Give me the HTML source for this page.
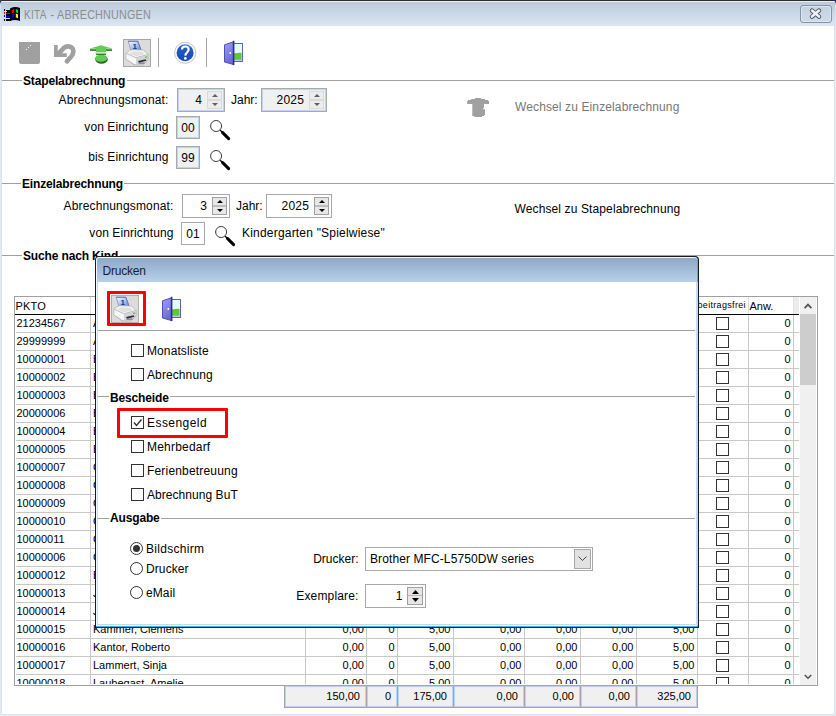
<!DOCTYPE html>
<html><head><meta charset="utf-8">
<style>
*{margin:0;padding:0;box-sizing:border-box}
html,body{width:836px;height:716px;overflow:hidden;background:#fff}
body{position:relative;font-family:"Liberation Sans",sans-serif;font-size:12px;color:#000}
.a{position:absolute}
.t{position:absolute;white-space:nowrap}
svg{position:absolute;overflow:visible}
</style></head><body>
<div class="a" style="left:0px;top:0px;width:5px;height:5px;background:#2a5da8"></div>
<div class="a" style="left:831px;top:0px;width:5px;height:5px;background:#2a5da8"></div>
<div class="a" style="left:0px;top:0px;width:836px;height:716px;background:#dae3ee;border-radius:5px 5px 0 0"></div>
<div class="a" style="left:0px;top:0px;width:836px;height:2px;background:#2e2e2e;border-radius:5px 5px 0 0"></div>
<div class="a" style="left:1px;top:1px;width:834px;height:1px;background:#e9eff6;border-radius:4px 4px 0 0"></div>
<div class="a" style="left:1px;top:2px;width:834px;height:24px;background:linear-gradient(#bccada,#dbe6f2);border-radius:0"></div>
<div class="a" style="left:0px;top:26px;width:836px;height:690px;background:#e7eaef"></div>
<div class="a" style="left:1px;top:26px;width:834px;height:689px;background:#d6e2f0"></div>
<div class="a" style="left:2px;top:26px;width:832px;height:688px;background:#fff"></div>
<svg style="left:0;top:0" width="30" height="30" viewBox="0 0 30 30" shape-rendering="crispEdges">
<rect x="4" y="9" width="1" height="2" fill="#000"/><rect x="4" y="12" width="1" height="2" fill="#f00"/><rect x="4" y="15" width="1" height="2" fill="#00f"/><rect x="4" y="19" width="1" height="2" fill="#000"/>
<rect x="6" y="10" width="5" height="1" fill="#000"/><rect x="7" y="11" width="4" height="1" fill="#000"/>
<rect x="6" y="12" width="5" height="3" fill="#000"/><rect x="6" y="13" width="5" height="1" fill="#f00"/>
<rect x="6" y="15" width="5" height="3" fill="#000"/><rect x="6" y="16" width="5" height="1" fill="#00f"/>
<rect x="6" y="19" width="5" height="2" fill="#000"/>
</svg>
<svg style="left:0;top:0" width="30" height="30" viewBox="0 0 30 30">
<path d="M10 8.5 Q15 6 20 8 V21 Q15 19 10 21 Z" fill="#000"/>
<path d="M12 10 L14.3 9 V12.3 L12 13.3Z" fill="#f00"/><path d="M15.8 9 L18 10 V13 L15.8 12.3Z" fill="#0e0"/>
<path d="M12 14.5 L14.3 13.6 V17 L12 18Z" fill="#00f"/><path d="M15.8 13.6 L18 14.5 V18.2 L15.8 17.2Z" fill="#ff0"/>
</svg>
<div class="t" style="top:7.84px;font-size:12px;line-height:14px;color:#8c8c8c;letter-spacing:0.3px;left:24.2px;transform:scaleX(0.84);transform-origin:0 0;">KITA</div>
<div class="t" style="top:7.84px;font-size:12px;line-height:14px;color:#8c8c8c;left:50.2px;">-</div>
<div class="t" style="top:7.84px;font-size:12px;line-height:14px;color:#8c8c8c;letter-spacing:0.2px;left:57.3px;transform:scaleX(0.9);transform-origin:0 0;">ABRECHNUNGEN</div>
<div class="a" style="left:800px;top:5px;width:32px;height:18px;border:1px solid #8593aa;border-radius:3px;background:linear-gradient(#c4d1df,#d0dbe8);box-shadow:inset 0 0 0 1px #dde6f0"></div>
<svg style="left:808px;top:7px" width="15" height="13" viewBox="0 0 15 13">
<path d="M4 3.6 L11 9.6 M11 3.6 L4 9.6" stroke="#454f60" stroke-width="4.4" stroke-linecap="round"/>
<path d="M4 3.6 L11 9.6 M11 3.6 L4 9.6" stroke="#f2f2f2" stroke-width="2.6" stroke-linecap="round"/>
</svg>
<div class="a" style="left:19px;top:42px;width:21px;height:22px;background:#a0a0a0;border-radius:0 0 2px 2px"></div>
<svg style="left:0;top:0" width="60" height="60" shape-rendering="crispEdges"><rect x="30" y="45" width="1" height="1" fill="#fff"/><rect x="28" y="47" width="1" height="1" fill="#fff"/><rect x="26" y="49" width="1" height="1" fill="#fff"/></svg>
<svg style="left:0;top:0" width="90" height="70" viewBox="0 0 90 70">
<path d="M54 45 H57.7 V53.3 H66.8 V56.9 H54 Z" fill="#a0a0a0"/>
<path d="M58.5 53.5 L64 47.8 Q65.5 46.3 68 46.3 A5.4 4.8 0 0 1 73.4 51.2 Q73.4 54 71 56.8 L66.9 61.3" fill="none" stroke="#a0a0a0" stroke-width="4.7" stroke-linecap="round"/>
</svg>
<svg style="left:84px;top:40px" width="30" height="30" viewBox="84 40 30 30"><path d="M90 50.7 V48.8 Q92 47.6 96 46.8 L99.5 45.8 Q101 44.9 102.5 45.8 L106 46.8 Q110 47.6 112 48.8 V50.7 Z" fill="#62cc55"/>
<rect x="90" y="49.6" width="6" height="1.1" fill="#2b6a26"/><rect x="106" y="49.6" width="6" height="1.1" fill="#2b6a26"/>
<rect x="90.5" y="48.2" width="5.5" height="0.8" fill="#9be290"/><rect x="106" y="48.2" width="5.5" height="0.8" fill="#9be290"/>
<rect x="96" y="50" width="10" height="2.5" fill="#62cc55"/>
<rect x="95.3" y="52.3" width="11.4" height="1.3" fill="#d0f0c8"/>
<rect x="96" y="53.6" width="10" height="1.6" fill="#3c7a34"/>
<ellipse cx="101.5" cy="59.5" rx="6.3" ry="4.2" fill="#2b6a26"/>
<ellipse cx="101" cy="58.4" rx="6.1" ry="3.4" fill="#62cc55"/></svg>
<div class="a" style="left:123px;top:39px;width:28px;height:28px;border:1px solid #a6a6a6;background:#dcdcdc"></div>
<svg style="left:123px;top:39px" width="30" height="30" viewBox="123 39 30 30">
<defs><linearGradient id="pp0" x1="0" y1="0" x2="1" y2="1"><stop offset="0" stop-color="#ffffff"/><stop offset="0.6" stop-color="#9cc0f0"/><stop offset="1" stop-color="#5b8fe0"/></linearGradient></defs>
<path d="M128.3 41.2 L137.8 41.2 L141 50.2 L130.8 50.2 Z" fill="url(#pp0)" stroke="#8a8ed0" stroke-width="0.8"/>
<path d="M128 41.3 H137.8 L141 50" fill="none" stroke="#6a6ab8" stroke-width="0.9"/>
<text x="132.4" y="49" font-size="8" font-weight="bold" fill="#26367a" font-family="Liberation Sans">1</text>
<path d="M126 53 L131 49.8 L143.5 50 L148 54.5 L148 60 L143 64.8 L134 64.8 L126 59 Z" fill="#e6e6e6" stroke="#a8a8a8" stroke-width="0.8"/>
<path d="M126.4 53 L131 50.2 L143.3 50.4 L147.6 54.5 L136 57.6 Z" fill="#f2f2f2"/>
<path d="M129.5 53.5 L133 51.6 L142 51.8 L144.5 54.2 L136 56.2 Z" fill="#e0e0e0"/>
<path d="M126.4 53.4 L136 57.8 L136 64.4 L126.4 58.8 Z" fill="#f7f7f7"/>
<path d="M126.4 53.4 L136 57.8 L147.6 54.6" fill="none" stroke="#b0b0b0" stroke-width="0.8"/>
<path d="M136 58 L147.6 55 V60 L143 64.4 H136 Z" fill="#d4d4d4"/>
<path d="M138 61 L145.5 59.2 L146.5 60.8 L139 62.8 Z" fill="#303030"/>
<rect x="138.5" y="62.6" width="6" height="1" fill="#5a5ab0"/>
<rect x="145" y="56.6" width="2.2" height="1.2" fill="#48c040"/>
</svg>
<div class="a" style="left:158px;top:38px;width:1px;height:29px;background:#a5a5a5"></div>
<svg style="left:0;top:0" width="250" height="70" viewBox="0 0 250 70">
<defs><linearGradient id="hg" x1="0" y1="0" x2="0" y2="1"><stop offset="0" stop-color="#3d7ee0"/><stop offset="0.25" stop-color="#2458c8"/><stop offset="1" stop-color="#1a46b8"/></linearGradient></defs>
<circle cx="185.2" cy="52.8" r="10.6" fill="#f7f8fb" stroke="#b9c0cc" stroke-width="0.9"/>
<circle cx="185.1" cy="52.8" r="8.5" fill="url(#hg)"/>
<path d="M182 49.6 C182 45.6 188.6 45.4 188.6 49.4 C188.6 52.2 185.4 52.6 185.3 55.6" fill="none" stroke="#fff" stroke-width="2.2"/>
<circle cx="185.3" cy="58.4" r="1.4" fill="#fff"/>
</svg>
<div class="a" style="left:206px;top:38px;width:1px;height:29px;background:#a5a5a5"></div>
<svg style="left:220px;top:38px" width="30" height="30" viewBox="220 38 30 30">
<defs><linearGradient id="dg0" x1="0" y1="0" x2="0.4" y2="1"><stop offset="0" stop-color="#a0a0fa"/><stop offset="1" stop-color="#6a6ad4"/></linearGradient></defs>
<rect x="233.5" y="43.5" width="9" height="18" fill="#c8c8f6" stroke="#6060b4" stroke-width="1"/>
<rect x="234" y="44" width="8" height="9.5" fill="#e4fcff"/>
<path d="M234 53.5 Q238 52.6 241.3 52.8 V59.8 H234Z" fill="#5cc83a"/>
<path d="M224.5 44.8 L233.5 41.8 V64.5 L224.5 62 Z" fill="url(#dg0)" stroke="#5050b0" stroke-width="1"/>
<rect x="232.8" y="40.8" width="1.6" height="24.3" fill="#2e2e80"/>
<ellipse cx="230.3" cy="53" rx="0.9" ry="1.1" fill="#fff"/>
</svg>
<div class="a" style="left:2px;top:80px;width:832px;height:1px;background:#a0a0a0"></div>
<div class="t" style="left:21.5px;top:73.84px;font-size:12px;line-height:14px;font-weight:bold;background:#fff;padding:0 1.5px;letter-spacing:-0.15px">Stapelabrechnung</div>
<div class="t" style="top:92.84px;font-size:12px;line-height:14px;color:#000;letter-spacing:0.15px;right:667.5px;text-align:right;">Abrechnungsmonat:</div>
<div class="a" style="left:177px;top:88px;width:48px;height:24px;border:1px solid #a9a9a9;background:#f0f0f0;box-shadow:inset 0 0 0 1px #bdd7f3"></div>
<div class="a" style="left:207px;top:91px;width:15px;height:9px;background:#ececec;border:1px solid #dadada"></div>
<div class="a" style="left:207px;top:100px;width:15px;height:9px;background:#ececec;border:1px solid #dadada"></div>
<svg style="left:211.5px;top:94px" width="6" height="3"><path d="M0 3 L3 0 L6 3Z" fill="#606060"/></svg>
<svg style="left:211.5px;top:103px" width="6" height="3"><path d="M0 0 L3 3 L6 0Z" fill="#606060"/></svg>
<div class="t" style="top:92.84px;font-size:12px;line-height:14px;color:#000;letter-spacing:0.3px;right:633.7px;text-align:right;">4</div>
<div class="t" style="top:92.84px;font-size:12px;line-height:14px;color:#000;left:231px;">Jahr:</div>
<div class="a" style="left:261px;top:88px;width:66px;height:24px;border:1px solid #a9a9a9;background:#f0f0f0;box-shadow:inset 0 0 0 1px #bdd7f3"></div>
<div class="a" style="left:309px;top:91px;width:15px;height:9px;background:#ececec;border:1px solid #dadada"></div>
<div class="a" style="left:309px;top:100px;width:15px;height:9px;background:#ececec;border:1px solid #dadada"></div>
<svg style="left:313.5px;top:94px" width="6" height="3"><path d="M0 3 L3 0 L6 3Z" fill="#606060"/></svg>
<svg style="left:313.5px;top:103px" width="6" height="3"><path d="M0 0 L3 3 L6 0Z" fill="#606060"/></svg>
<div class="t" style="top:92.84px;font-size:12px;line-height:14px;color:#000;letter-spacing:0.3px;right:531.7px;text-align:right;">2025</div>
<div class="t" style="top:120.04px;font-size:12px;line-height:14px;color:#000;letter-spacing:0.1px;right:667.5px;text-align:right;">von Einrichtung</div>
<div class="a" style="left:176px;top:116px;width:24px;height:23px;border:1px solid #a9a9a9;background:#f0f0f0;box-shadow:inset 0 0 0 1px #bdd7f3"></div>
<div class="t" style="top:120.84px;font-size:12px;line-height:14px;color:#000;left:88px;width:200px;text-align:center;">00</div>
<svg style="left:210px;top:120px" width="21" height="21" viewBox="0 0 21 21">
<circle cx="6.1" cy="6" r="5.5" fill="#fff" stroke="#3c3c3c" stroke-width="1"/>
<path d="M10.2 10.2 L12.5 12.5" stroke="#000" stroke-width="1.4"/>
<path d="M12.6 12.6 L18.6 18.6" stroke="#000" stroke-width="3" stroke-linecap="round"/>
</svg>
<div class="t" style="top:150.04px;font-size:12px;line-height:14px;color:#000;letter-spacing:0.1px;right:667.5px;text-align:right;">bis Einrichtung</div>
<div class="a" style="left:176px;top:146px;width:24px;height:23px;border:1px solid #a9a9a9;background:#f0f0f0;box-shadow:inset 0 0 0 1px #bdd7f3"></div>
<div class="t" style="top:150.84px;font-size:12px;line-height:14px;color:#000;left:88px;width:200px;text-align:center;">99</div>
<svg style="left:210px;top:150px" width="21" height="21" viewBox="0 0 21 21">
<circle cx="6.1" cy="6" r="5.5" fill="#fff" stroke="#3c3c3c" stroke-width="1"/>
<path d="M10.2 10.2 L12.5 12.5" stroke="#000" stroke-width="1.4"/>
<path d="M12.6 12.6 L18.6 18.6" stroke="#000" stroke-width="3" stroke-linecap="round"/>
</svg>
<svg style="left:460px;top:94px" width="32" height="26" viewBox="460 94 32 26"><path d="M475 98 H481 V99 H485 V100 H488 V101 H489 V104 H484 V108.3 H483 V109.3 H485 V115 H484 V116 H482 V117 H474.3 V116 H472.3 V104 H467.2 V101 H468 V100 H471.2 V99 H475 Z" fill="#a0a0a0"/></svg>
<div class="t" style="top:100.34px;font-size:12px;line-height:14px;color:#777;letter-spacing:0.12px;left:515px;">Wechsel zu Einzelabrechnung</div>
<div class="a" style="left:2px;top:183px;width:832px;height:1px;background:#a0a0a0"></div>
<div class="t" style="left:20.5px;top:176.84px;font-size:12px;line-height:14px;font-weight:bold;background:#fff;padding:0 1.5px;letter-spacing:-0.15px">Einzelabrechnung</div>
<div class="t" style="top:198.84px;font-size:12px;line-height:14px;color:#000;letter-spacing:0.15px;right:662.5px;text-align:right;">Abrechnungsmonat:</div>
<div class="a" style="left:182px;top:194px;width:48px;height:24px;border:1px solid #a6a6ac;background:#fff"></div>
<div class="a" style="left:212px;top:197px;width:15px;height:18px;background:#e8e8e8;border:1px solid #a0a0a0"></div>
<div class="a" style="left:213px;top:205px;width:13px;height:1.5px;background:#bdbdbd"></div>
<svg style="left:216.5px;top:200px" width="6" height="3"><path d="M0 3 L3 0 L6 3Z" fill="#000"/></svg>
<svg style="left:216.5px;top:208.5px" width="6" height="3"><path d="M0 0 L3 3 L6 0Z" fill="#000"/></svg>
<div class="t" style="top:198.84px;font-size:12px;line-height:14px;color:#000;letter-spacing:0.3px;right:628.7px;text-align:right;">3</div>
<div class="t" style="top:198.84px;font-size:12px;line-height:14px;color:#000;left:236px;">Jahr:</div>
<div class="a" style="left:266px;top:194px;width:66px;height:24px;border:1px solid #a6a6ac;background:#fff"></div>
<div class="a" style="left:314px;top:197px;width:15px;height:18px;background:#e8e8e8;border:1px solid #a0a0a0"></div>
<div class="a" style="left:315px;top:205px;width:13px;height:1.5px;background:#bdbdbd"></div>
<svg style="left:318.5px;top:200px" width="6" height="3"><path d="M0 3 L3 0 L6 3Z" fill="#000"/></svg>
<svg style="left:318.5px;top:208.5px" width="6" height="3"><path d="M0 0 L3 3 L6 0Z" fill="#000"/></svg>
<div class="t" style="top:198.84px;font-size:12px;line-height:14px;color:#000;letter-spacing:0.3px;right:526.7px;text-align:right;">2025</div>
<div class="t" style="top:225.84px;font-size:12px;line-height:14px;color:#000;letter-spacing:0.1px;right:662.5px;text-align:right;">von Einrichtung</div>
<div class="a" style="left:181px;top:222px;width:24px;height:23px;border:1px solid #a8a8ac;background:#fff"></div>
<div class="t" style="top:226.84px;font-size:12px;line-height:14px;color:#000;left:93px;width:200px;text-align:center;">01</div>
<svg style="left:215px;top:226px" width="21" height="21" viewBox="0 0 21 21">
<circle cx="6.1" cy="6" r="5.5" fill="#fff" stroke="#3c3c3c" stroke-width="1"/>
<path d="M10.2 10.2 L12.5 12.5" stroke="#000" stroke-width="1.4"/>
<path d="M12.6 12.6 L18.6 18.6" stroke="#000" stroke-width="3" stroke-linecap="round"/>
</svg>
<div class="t" style="top:225.84px;font-size:12px;line-height:14px;color:#000;letter-spacing:0.2px;left:242px;">Kindergarten "Spielwiese"</div>
<div class="t" style="top:201.84px;font-size:12px;line-height:14px;color:#000;letter-spacing:0.12px;left:514.5px;">Wechsel zu Stapelabrechnung</div>
<div class="a" style="left:2px;top:255px;width:832px;height:1px;background:#a0a0a0"></div>
<div class="t" style="left:21.5px;top:248.84px;font-size:12px;line-height:14px;font-weight:bold;background:#fff;padding:0 1.5px;letter-spacing:-0.15px">Suche nach Kind</div>
<div class="a" style="left:14px;top:296px;width:804px;height:390px;border:1px solid #a0a0a0;background:#fff"></div>
<div class="a" style="left:15px;top:297px;width:783px;height:17px;background:#fff"></div>
<div class="a" style="left:793px;top:297px;width:6px;height:17px;background:#ececec"></div>
<div class="a" style="left:90px;top:297px;width:1px;height:17px;background:#e0e0e0"></div>
<div class="a" style="left:305px;top:297px;width:1px;height:17px;background:#e0e0e0"></div>
<div class="a" style="left:366px;top:297px;width:1px;height:17px;background:#e0e0e0"></div>
<div class="a" style="left:397px;top:297px;width:1px;height:17px;background:#e0e0e0"></div>
<div class="a" style="left:453px;top:297px;width:1px;height:17px;background:#e0e0e0"></div>
<div class="a" style="left:524px;top:297px;width:1px;height:17px;background:#e0e0e0"></div>
<div class="a" style="left:580px;top:297px;width:1px;height:17px;background:#e0e0e0"></div>
<div class="a" style="left:636px;top:297px;width:1px;height:17px;background:#e0e0e0"></div>
<div class="a" style="left:697px;top:297px;width:1px;height:17px;background:#e0e0e0"></div>
<div class="a" style="left:748px;top:297px;width:1px;height:17px;background:#e0e0e0"></div>
<div class="a" style="left:793px;top:297px;width:1px;height:17px;background:#e0e0e0"></div>
<div class="a" style="left:15px;top:314px;width:784px;height:1px;background:#000"></div>
<div class="t" style="top:299.69px;font-size:11px;line-height:13px;color:#000;letter-spacing:0.15px;left:15.5px;">PKTO</div>
<div class="t" style="top:299.69px;font-size:11px;line-height:13px;color:#000;left:749.5px;">Anw.</div>
<div class="t" style="top:300.38px;font-size:9px;line-height:11px;color:#000;letter-spacing:0.32px;left:697.5px;">beitragsfrei</div>
<div class="a" style="left:15px;top:315px;width:784px;height:369px;overflow:hidden">
<div class="a" style="left:-15px;top:-315px;width:836px;height:716px">
<div class="a" style="left:90px;top:315px;width:1px;height:370px;background:#c8c8c8"></div>
<div class="a" style="left:305px;top:315px;width:1px;height:370px;background:#c8c8c8"></div>
<div class="a" style="left:366px;top:315px;width:1px;height:370px;background:#c8c8c8"></div>
<div class="a" style="left:397px;top:315px;width:1px;height:370px;background:#c8c8c8"></div>
<div class="a" style="left:453px;top:315px;width:1px;height:370px;background:#c8c8c8"></div>
<div class="a" style="left:524px;top:315px;width:1px;height:370px;background:#c8c8c8"></div>
<div class="a" style="left:580px;top:315px;width:1px;height:370px;background:#c8c8c8"></div>
<div class="a" style="left:636px;top:315px;width:1px;height:370px;background:#c8c8c8"></div>
<div class="a" style="left:697px;top:315px;width:1px;height:370px;background:#c8c8c8"></div>
<div class="a" style="left:748px;top:315px;width:1px;height:370px;background:#c8c8c8"></div>
<div class="a" style="left:793px;top:315px;width:1px;height:370px;background:#c8c8c8"></div>
<div class="t" style="left:16.5px;top:316.69px;font-size:11px;line-height:13px">21234567</div>
<div class="t" style="left:93px;top:316.69px;font-size:11px;line-height:13px">Albrecht, Anna</div>
<div class="t" style="right:472px;top:316.69px;font-size:11px;line-height:13px;text-align:right">0,00</div>
<div class="t" style="right:441.5px;top:316.69px;font-size:11px;line-height:13px;text-align:right">0</div>
<div class="t" style="right:385.5px;top:316.69px;font-size:11px;line-height:13px;text-align:right">5,00</div>
<div class="t" style="right:314.5px;top:316.69px;font-size:11px;line-height:13px;text-align:right">0,00</div>
<div class="t" style="right:258.5px;top:316.69px;font-size:11px;line-height:13px;text-align:right">0,00</div>
<div class="t" style="right:202.5px;top:316.69px;font-size:11px;line-height:13px;text-align:right">0,00</div>
<div class="t" style="right:141.5px;top:316.69px;font-size:11px;line-height:13px;text-align:right">5,00</div>
<div class="t" style="right:45.5px;top:316.69px;font-size:11px;line-height:13px;text-align:right">0</div>
<div class="a" style="left:716px;top:317px;width:13px;height:13px;border:1px solid #333"></div>
<div class="a" style="left:16px;top:332px;width:783px;height:1px;background:#c8c8c8"></div>
<div class="t" style="left:16.5px;top:334.69px;font-size:11px;line-height:13px">29999999</div>
<div class="t" style="left:93px;top:334.69px;font-size:11px;line-height:13px">Anders, Paul</div>
<div class="t" style="right:472px;top:334.69px;font-size:11px;line-height:13px;text-align:right">0,00</div>
<div class="t" style="right:441.5px;top:334.69px;font-size:11px;line-height:13px;text-align:right">0</div>
<div class="t" style="right:385.5px;top:334.69px;font-size:11px;line-height:13px;text-align:right">5,00</div>
<div class="t" style="right:314.5px;top:334.69px;font-size:11px;line-height:13px;text-align:right">0,00</div>
<div class="t" style="right:258.5px;top:334.69px;font-size:11px;line-height:13px;text-align:right">0,00</div>
<div class="t" style="right:202.5px;top:334.69px;font-size:11px;line-height:13px;text-align:right">0,00</div>
<div class="t" style="right:141.5px;top:334.69px;font-size:11px;line-height:13px;text-align:right">5,00</div>
<div class="t" style="right:45.5px;top:334.69px;font-size:11px;line-height:13px;text-align:right">0</div>
<div class="a" style="left:716px;top:335px;width:13px;height:13px;border:1px solid #333"></div>
<div class="a" style="left:16px;top:350px;width:783px;height:1px;background:#c8c8c8"></div>
<div class="t" style="left:16.5px;top:352.69px;font-size:11px;line-height:13px">10000001</div>
<div class="t" style="left:93px;top:352.69px;font-size:11px;line-height:13px">Bauer, Lena</div>
<div class="t" style="right:472px;top:352.69px;font-size:11px;line-height:13px;text-align:right">0,00</div>
<div class="t" style="right:441.5px;top:352.69px;font-size:11px;line-height:13px;text-align:right">0</div>
<div class="t" style="right:385.5px;top:352.69px;font-size:11px;line-height:13px;text-align:right">5,00</div>
<div class="t" style="right:314.5px;top:352.69px;font-size:11px;line-height:13px;text-align:right">0,00</div>
<div class="t" style="right:258.5px;top:352.69px;font-size:11px;line-height:13px;text-align:right">0,00</div>
<div class="t" style="right:202.5px;top:352.69px;font-size:11px;line-height:13px;text-align:right">0,00</div>
<div class="t" style="right:141.5px;top:352.69px;font-size:11px;line-height:13px;text-align:right">5,00</div>
<div class="t" style="right:45.5px;top:352.69px;font-size:11px;line-height:13px;text-align:right">0</div>
<div class="a" style="left:716px;top:353px;width:13px;height:13px;border:1px solid #333"></div>
<div class="a" style="left:16px;top:368px;width:783px;height:1px;background:#c8c8c8"></div>
<div class="t" style="left:16.5px;top:370.69px;font-size:11px;line-height:13px">10000002</div>
<div class="t" style="left:93px;top:370.69px;font-size:11px;line-height:13px">Becker, Jonas</div>
<div class="t" style="right:472px;top:370.69px;font-size:11px;line-height:13px;text-align:right">0,00</div>
<div class="t" style="right:441.5px;top:370.69px;font-size:11px;line-height:13px;text-align:right">0</div>
<div class="t" style="right:385.5px;top:370.69px;font-size:11px;line-height:13px;text-align:right">5,00</div>
<div class="t" style="right:314.5px;top:370.69px;font-size:11px;line-height:13px;text-align:right">0,00</div>
<div class="t" style="right:258.5px;top:370.69px;font-size:11px;line-height:13px;text-align:right">0,00</div>
<div class="t" style="right:202.5px;top:370.69px;font-size:11px;line-height:13px;text-align:right">0,00</div>
<div class="t" style="right:141.5px;top:370.69px;font-size:11px;line-height:13px;text-align:right">5,00</div>
<div class="t" style="right:45.5px;top:370.69px;font-size:11px;line-height:13px;text-align:right">0</div>
<div class="a" style="left:716px;top:371px;width:13px;height:13px;border:1px solid #333"></div>
<div class="a" style="left:16px;top:386px;width:783px;height:1px;background:#c8c8c8"></div>
<div class="t" style="left:16.5px;top:388.69px;font-size:11px;line-height:13px">10000003</div>
<div class="t" style="left:93px;top:388.69px;font-size:11px;line-height:13px">Berger, Mia</div>
<div class="t" style="right:472px;top:388.69px;font-size:11px;line-height:13px;text-align:right">0,00</div>
<div class="t" style="right:441.5px;top:388.69px;font-size:11px;line-height:13px;text-align:right">0</div>
<div class="t" style="right:385.5px;top:388.69px;font-size:11px;line-height:13px;text-align:right">5,00</div>
<div class="t" style="right:314.5px;top:388.69px;font-size:11px;line-height:13px;text-align:right">0,00</div>
<div class="t" style="right:258.5px;top:388.69px;font-size:11px;line-height:13px;text-align:right">0,00</div>
<div class="t" style="right:202.5px;top:388.69px;font-size:11px;line-height:13px;text-align:right">0,00</div>
<div class="t" style="right:141.5px;top:388.69px;font-size:11px;line-height:13px;text-align:right">5,00</div>
<div class="t" style="right:45.5px;top:388.69px;font-size:11px;line-height:13px;text-align:right">0</div>
<div class="a" style="left:716px;top:389px;width:13px;height:13px;border:1px solid #333"></div>
<div class="a" style="left:16px;top:404px;width:783px;height:1px;background:#c8c8c8"></div>
<div class="t" style="left:16.5px;top:406.69px;font-size:11px;line-height:13px">20000006</div>
<div class="t" style="left:93px;top:406.69px;font-size:11px;line-height:13px">Braun, Felix</div>
<div class="t" style="right:472px;top:406.69px;font-size:11px;line-height:13px;text-align:right">0,00</div>
<div class="t" style="right:441.5px;top:406.69px;font-size:11px;line-height:13px;text-align:right">0</div>
<div class="t" style="right:385.5px;top:406.69px;font-size:11px;line-height:13px;text-align:right">5,00</div>
<div class="t" style="right:314.5px;top:406.69px;font-size:11px;line-height:13px;text-align:right">0,00</div>
<div class="t" style="right:258.5px;top:406.69px;font-size:11px;line-height:13px;text-align:right">0,00</div>
<div class="t" style="right:202.5px;top:406.69px;font-size:11px;line-height:13px;text-align:right">0,00</div>
<div class="t" style="right:141.5px;top:406.69px;font-size:11px;line-height:13px;text-align:right">5,00</div>
<div class="t" style="right:45.5px;top:406.69px;font-size:11px;line-height:13px;text-align:right">0</div>
<div class="a" style="left:716px;top:407px;width:13px;height:13px;border:1px solid #333"></div>
<div class="a" style="left:16px;top:422px;width:783px;height:1px;background:#c8c8c8"></div>
<div class="t" style="left:16.5px;top:424.69px;font-size:11px;line-height:13px">10000004</div>
<div class="t" style="left:93px;top:424.69px;font-size:11px;line-height:13px">Brandt, Emma</div>
<div class="t" style="right:472px;top:424.69px;font-size:11px;line-height:13px;text-align:right">0,00</div>
<div class="t" style="right:441.5px;top:424.69px;font-size:11px;line-height:13px;text-align:right">0</div>
<div class="t" style="right:385.5px;top:424.69px;font-size:11px;line-height:13px;text-align:right">5,00</div>
<div class="t" style="right:314.5px;top:424.69px;font-size:11px;line-height:13px;text-align:right">0,00</div>
<div class="t" style="right:258.5px;top:424.69px;font-size:11px;line-height:13px;text-align:right">0,00</div>
<div class="t" style="right:202.5px;top:424.69px;font-size:11px;line-height:13px;text-align:right">0,00</div>
<div class="t" style="right:141.5px;top:424.69px;font-size:11px;line-height:13px;text-align:right">5,00</div>
<div class="t" style="right:45.5px;top:424.69px;font-size:11px;line-height:13px;text-align:right">0</div>
<div class="a" style="left:716px;top:425px;width:13px;height:13px;border:1px solid #333"></div>
<div class="a" style="left:16px;top:440px;width:783px;height:1px;background:#c8c8c8"></div>
<div class="t" style="left:16.5px;top:442.69px;font-size:11px;line-height:13px">10000005</div>
<div class="t" style="left:93px;top:442.69px;font-size:11px;line-height:13px">Busch, Leon</div>
<div class="t" style="right:472px;top:442.69px;font-size:11px;line-height:13px;text-align:right">0,00</div>
<div class="t" style="right:441.5px;top:442.69px;font-size:11px;line-height:13px;text-align:right">0</div>
<div class="t" style="right:385.5px;top:442.69px;font-size:11px;line-height:13px;text-align:right">5,00</div>
<div class="t" style="right:314.5px;top:442.69px;font-size:11px;line-height:13px;text-align:right">0,00</div>
<div class="t" style="right:258.5px;top:442.69px;font-size:11px;line-height:13px;text-align:right">0,00</div>
<div class="t" style="right:202.5px;top:442.69px;font-size:11px;line-height:13px;text-align:right">0,00</div>
<div class="t" style="right:141.5px;top:442.69px;font-size:11px;line-height:13px;text-align:right">5,00</div>
<div class="t" style="right:45.5px;top:442.69px;font-size:11px;line-height:13px;text-align:right">0</div>
<div class="a" style="left:716px;top:443px;width:13px;height:13px;border:1px solid #333"></div>
<div class="a" style="left:16px;top:458px;width:783px;height:1px;background:#c8c8c8"></div>
<div class="t" style="left:16.5px;top:460.69px;font-size:11px;line-height:13px">10000007</div>
<div class="t" style="left:93px;top:460.69px;font-size:11px;line-height:13px">Gerber, Lina</div>
<div class="t" style="right:472px;top:460.69px;font-size:11px;line-height:13px;text-align:right">0,00</div>
<div class="t" style="right:441.5px;top:460.69px;font-size:11px;line-height:13px;text-align:right">0</div>
<div class="t" style="right:385.5px;top:460.69px;font-size:11px;line-height:13px;text-align:right">5,00</div>
<div class="t" style="right:314.5px;top:460.69px;font-size:11px;line-height:13px;text-align:right">0,00</div>
<div class="t" style="right:258.5px;top:460.69px;font-size:11px;line-height:13px;text-align:right">0,00</div>
<div class="t" style="right:202.5px;top:460.69px;font-size:11px;line-height:13px;text-align:right">0,00</div>
<div class="t" style="right:141.5px;top:460.69px;font-size:11px;line-height:13px;text-align:right">5,00</div>
<div class="t" style="right:45.5px;top:460.69px;font-size:11px;line-height:13px;text-align:right">0</div>
<div class="a" style="left:716px;top:461px;width:13px;height:13px;border:1px solid #333"></div>
<div class="a" style="left:16px;top:476px;width:783px;height:1px;background:#c8c8c8"></div>
<div class="t" style="left:16.5px;top:478.69px;font-size:11px;line-height:13px">10000008</div>
<div class="t" style="left:93px;top:478.69px;font-size:11px;line-height:13px">Graf, Tim</div>
<div class="t" style="right:472px;top:478.69px;font-size:11px;line-height:13px;text-align:right">0,00</div>
<div class="t" style="right:441.5px;top:478.69px;font-size:11px;line-height:13px;text-align:right">0</div>
<div class="t" style="right:385.5px;top:478.69px;font-size:11px;line-height:13px;text-align:right">5,00</div>
<div class="t" style="right:314.5px;top:478.69px;font-size:11px;line-height:13px;text-align:right">0,00</div>
<div class="t" style="right:258.5px;top:478.69px;font-size:11px;line-height:13px;text-align:right">0,00</div>
<div class="t" style="right:202.5px;top:478.69px;font-size:11px;line-height:13px;text-align:right">0,00</div>
<div class="t" style="right:141.5px;top:478.69px;font-size:11px;line-height:13px;text-align:right">5,00</div>
<div class="t" style="right:45.5px;top:478.69px;font-size:11px;line-height:13px;text-align:right">0</div>
<div class="a" style="left:716px;top:479px;width:13px;height:13px;border:1px solid #333"></div>
<div class="a" style="left:16px;top:494px;width:783px;height:1px;background:#c8c8c8"></div>
<div class="t" style="left:16.5px;top:496.69px;font-size:11px;line-height:13px">10000009</div>
<div class="t" style="left:93px;top:496.69px;font-size:11px;line-height:13px">Gross, Noah</div>
<div class="t" style="right:472px;top:496.69px;font-size:11px;line-height:13px;text-align:right">0,00</div>
<div class="t" style="right:441.5px;top:496.69px;font-size:11px;line-height:13px;text-align:right">0</div>
<div class="t" style="right:385.5px;top:496.69px;font-size:11px;line-height:13px;text-align:right">5,00</div>
<div class="t" style="right:314.5px;top:496.69px;font-size:11px;line-height:13px;text-align:right">0,00</div>
<div class="t" style="right:258.5px;top:496.69px;font-size:11px;line-height:13px;text-align:right">0,00</div>
<div class="t" style="right:202.5px;top:496.69px;font-size:11px;line-height:13px;text-align:right">0,00</div>
<div class="t" style="right:141.5px;top:496.69px;font-size:11px;line-height:13px;text-align:right">5,00</div>
<div class="t" style="right:45.5px;top:496.69px;font-size:11px;line-height:13px;text-align:right">0</div>
<div class="a" style="left:716px;top:497px;width:13px;height:13px;border:1px solid #333"></div>
<div class="a" style="left:16px;top:512px;width:783px;height:1px;background:#c8c8c8"></div>
<div class="t" style="left:16.5px;top:514.69px;font-size:11px;line-height:13px">10000010</div>
<div class="t" style="left:93px;top:514.69px;font-size:11px;line-height:13px">Günther, Ida</div>
<div class="t" style="right:472px;top:514.69px;font-size:11px;line-height:13px;text-align:right">0,00</div>
<div class="t" style="right:441.5px;top:514.69px;font-size:11px;line-height:13px;text-align:right">0</div>
<div class="t" style="right:385.5px;top:514.69px;font-size:11px;line-height:13px;text-align:right">5,00</div>
<div class="t" style="right:314.5px;top:514.69px;font-size:11px;line-height:13px;text-align:right">0,00</div>
<div class="t" style="right:258.5px;top:514.69px;font-size:11px;line-height:13px;text-align:right">0,00</div>
<div class="t" style="right:202.5px;top:514.69px;font-size:11px;line-height:13px;text-align:right">0,00</div>
<div class="t" style="right:141.5px;top:514.69px;font-size:11px;line-height:13px;text-align:right">5,00</div>
<div class="t" style="right:45.5px;top:514.69px;font-size:11px;line-height:13px;text-align:right">0</div>
<div class="a" style="left:716px;top:515px;width:13px;height:13px;border:1px solid #333"></div>
<div class="a" style="left:16px;top:530px;width:783px;height:1px;background:#c8c8c8"></div>
<div class="t" style="left:16.5px;top:532.69px;font-size:11px;line-height:13px">10000011</div>
<div class="t" style="left:93px;top:532.69px;font-size:11px;line-height:13px">Gärtner, Ben</div>
<div class="t" style="right:472px;top:532.69px;font-size:11px;line-height:13px;text-align:right">0,00</div>
<div class="t" style="right:441.5px;top:532.69px;font-size:11px;line-height:13px;text-align:right">0</div>
<div class="t" style="right:385.5px;top:532.69px;font-size:11px;line-height:13px;text-align:right">5,00</div>
<div class="t" style="right:314.5px;top:532.69px;font-size:11px;line-height:13px;text-align:right">0,00</div>
<div class="t" style="right:258.5px;top:532.69px;font-size:11px;line-height:13px;text-align:right">0,00</div>
<div class="t" style="right:202.5px;top:532.69px;font-size:11px;line-height:13px;text-align:right">0,00</div>
<div class="t" style="right:141.5px;top:532.69px;font-size:11px;line-height:13px;text-align:right">5,00</div>
<div class="t" style="right:45.5px;top:532.69px;font-size:11px;line-height:13px;text-align:right">0</div>
<div class="a" style="left:716px;top:533px;width:13px;height:13px;border:1px solid #333"></div>
<div class="a" style="left:16px;top:548px;width:783px;height:1px;background:#c8c8c8"></div>
<div class="t" style="left:16.5px;top:550.69px;font-size:11px;line-height:13px">10000006</div>
<div class="t" style="left:93px;top:550.69px;font-size:11px;line-height:13px">Götz, Lea</div>
<div class="t" style="right:472px;top:550.69px;font-size:11px;line-height:13px;text-align:right">0,00</div>
<div class="t" style="right:441.5px;top:550.69px;font-size:11px;line-height:13px;text-align:right">0</div>
<div class="t" style="right:385.5px;top:550.69px;font-size:11px;line-height:13px;text-align:right">5,00</div>
<div class="t" style="right:314.5px;top:550.69px;font-size:11px;line-height:13px;text-align:right">0,00</div>
<div class="t" style="right:258.5px;top:550.69px;font-size:11px;line-height:13px;text-align:right">0,00</div>
<div class="t" style="right:202.5px;top:550.69px;font-size:11px;line-height:13px;text-align:right">0,00</div>
<div class="t" style="right:141.5px;top:550.69px;font-size:11px;line-height:13px;text-align:right">5,00</div>
<div class="t" style="right:45.5px;top:550.69px;font-size:11px;line-height:13px;text-align:right">0</div>
<div class="a" style="left:716px;top:551px;width:13px;height:13px;border:1px solid #333"></div>
<div class="a" style="left:16px;top:566px;width:783px;height:1px;background:#c8c8c8"></div>
<div class="t" style="left:16.5px;top:568.69px;font-size:11px;line-height:13px">10000012</div>
<div class="t" style="left:93px;top:568.69px;font-size:11px;line-height:13px">Bach, Tom</div>
<div class="t" style="right:472px;top:568.69px;font-size:11px;line-height:13px;text-align:right">0,00</div>
<div class="t" style="right:441.5px;top:568.69px;font-size:11px;line-height:13px;text-align:right">0</div>
<div class="t" style="right:385.5px;top:568.69px;font-size:11px;line-height:13px;text-align:right">5,00</div>
<div class="t" style="right:314.5px;top:568.69px;font-size:11px;line-height:13px;text-align:right">0,00</div>
<div class="t" style="right:258.5px;top:568.69px;font-size:11px;line-height:13px;text-align:right">0,00</div>
<div class="t" style="right:202.5px;top:568.69px;font-size:11px;line-height:13px;text-align:right">0,00</div>
<div class="t" style="right:141.5px;top:568.69px;font-size:11px;line-height:13px;text-align:right">5,00</div>
<div class="t" style="right:45.5px;top:568.69px;font-size:11px;line-height:13px;text-align:right">0</div>
<div class="a" style="left:716px;top:569px;width:13px;height:13px;border:1px solid #333"></div>
<div class="a" style="left:16px;top:584px;width:783px;height:1px;background:#c8c8c8"></div>
<div class="t" style="left:16.5px;top:586.69px;font-size:11px;line-height:13px">10000013</div>
<div class="t" style="left:93px;top:586.69px;font-size:11px;line-height:13px">Jansen, Ole</div>
<div class="t" style="right:472px;top:586.69px;font-size:11px;line-height:13px;text-align:right">0,00</div>
<div class="t" style="right:441.5px;top:586.69px;font-size:11px;line-height:13px;text-align:right">0</div>
<div class="t" style="right:385.5px;top:586.69px;font-size:11px;line-height:13px;text-align:right">5,00</div>
<div class="t" style="right:314.5px;top:586.69px;font-size:11px;line-height:13px;text-align:right">0,00</div>
<div class="t" style="right:258.5px;top:586.69px;font-size:11px;line-height:13px;text-align:right">0,00</div>
<div class="t" style="right:202.5px;top:586.69px;font-size:11px;line-height:13px;text-align:right">0,00</div>
<div class="t" style="right:141.5px;top:586.69px;font-size:11px;line-height:13px;text-align:right">5,00</div>
<div class="t" style="right:45.5px;top:586.69px;font-size:11px;line-height:13px;text-align:right">0</div>
<div class="a" style="left:716px;top:587px;width:13px;height:13px;border:1px solid #333"></div>
<div class="a" style="left:16px;top:602px;width:783px;height:1px;background:#c8c8c8"></div>
<div class="t" style="left:16.5px;top:604.69px;font-size:11px;line-height:13px">10000014</div>
<div class="t" style="left:93px;top:604.69px;font-size:11px;line-height:13px">Jung, Mara</div>
<div class="t" style="right:472px;top:604.69px;font-size:11px;line-height:13px;text-align:right">0,00</div>
<div class="t" style="right:441.5px;top:604.69px;font-size:11px;line-height:13px;text-align:right">0</div>
<div class="t" style="right:385.5px;top:604.69px;font-size:11px;line-height:13px;text-align:right">5,00</div>
<div class="t" style="right:314.5px;top:604.69px;font-size:11px;line-height:13px;text-align:right">0,00</div>
<div class="t" style="right:258.5px;top:604.69px;font-size:11px;line-height:13px;text-align:right">0,00</div>
<div class="t" style="right:202.5px;top:604.69px;font-size:11px;line-height:13px;text-align:right">0,00</div>
<div class="t" style="right:141.5px;top:604.69px;font-size:11px;line-height:13px;text-align:right">5,00</div>
<div class="t" style="right:45.5px;top:604.69px;font-size:11px;line-height:13px;text-align:right">0</div>
<div class="a" style="left:716px;top:605px;width:13px;height:13px;border:1px solid #333"></div>
<div class="a" style="left:16px;top:620px;width:783px;height:1px;background:#c8c8c8"></div>
<div class="t" style="left:16.5px;top:622.69px;font-size:11px;line-height:13px">10000015</div>
<div class="t" style="left:93px;top:622.69px;font-size:11px;line-height:13px">Kammer, Clemens</div>
<div class="t" style="right:472px;top:622.69px;font-size:11px;line-height:13px;text-align:right">0,00</div>
<div class="t" style="right:441.5px;top:622.69px;font-size:11px;line-height:13px;text-align:right">0</div>
<div class="t" style="right:385.5px;top:622.69px;font-size:11px;line-height:13px;text-align:right">5,00</div>
<div class="t" style="right:314.5px;top:622.69px;font-size:11px;line-height:13px;text-align:right">0,00</div>
<div class="t" style="right:258.5px;top:622.69px;font-size:11px;line-height:13px;text-align:right">0,00</div>
<div class="t" style="right:202.5px;top:622.69px;font-size:11px;line-height:13px;text-align:right">0,00</div>
<div class="t" style="right:141.5px;top:622.69px;font-size:11px;line-height:13px;text-align:right">5,00</div>
<div class="t" style="right:45.5px;top:622.69px;font-size:11px;line-height:13px;text-align:right">0</div>
<div class="a" style="left:716px;top:623px;width:13px;height:13px;border:1px solid #333"></div>
<div class="a" style="left:16px;top:638px;width:783px;height:1px;background:#c8c8c8"></div>
<div class="t" style="left:16.5px;top:640.69px;font-size:11px;line-height:13px">10000016</div>
<div class="t" style="left:93px;top:640.69px;font-size:11px;line-height:13px">Kantor, Roberto</div>
<div class="t" style="right:472px;top:640.69px;font-size:11px;line-height:13px;text-align:right">0,00</div>
<div class="t" style="right:441.5px;top:640.69px;font-size:11px;line-height:13px;text-align:right">0</div>
<div class="t" style="right:385.5px;top:640.69px;font-size:11px;line-height:13px;text-align:right">5,00</div>
<div class="t" style="right:314.5px;top:640.69px;font-size:11px;line-height:13px;text-align:right">0,00</div>
<div class="t" style="right:258.5px;top:640.69px;font-size:11px;line-height:13px;text-align:right">0,00</div>
<div class="t" style="right:202.5px;top:640.69px;font-size:11px;line-height:13px;text-align:right">0,00</div>
<div class="t" style="right:141.5px;top:640.69px;font-size:11px;line-height:13px;text-align:right">5,00</div>
<div class="t" style="right:45.5px;top:640.69px;font-size:11px;line-height:13px;text-align:right">0</div>
<div class="a" style="left:716px;top:641px;width:13px;height:13px;border:1px solid #333"></div>
<div class="a" style="left:16px;top:656px;width:783px;height:1px;background:#c8c8c8"></div>
<div class="t" style="left:16.5px;top:658.69px;font-size:11px;line-height:13px">10000017</div>
<div class="t" style="left:93px;top:658.69px;font-size:11px;line-height:13px">Lammert, Sinja</div>
<div class="t" style="right:472px;top:658.69px;font-size:11px;line-height:13px;text-align:right">0,00</div>
<div class="t" style="right:441.5px;top:658.69px;font-size:11px;line-height:13px;text-align:right">0</div>
<div class="t" style="right:385.5px;top:658.69px;font-size:11px;line-height:13px;text-align:right">5,00</div>
<div class="t" style="right:314.5px;top:658.69px;font-size:11px;line-height:13px;text-align:right">0,00</div>
<div class="t" style="right:258.5px;top:658.69px;font-size:11px;line-height:13px;text-align:right">0,00</div>
<div class="t" style="right:202.5px;top:658.69px;font-size:11px;line-height:13px;text-align:right">0,00</div>
<div class="t" style="right:141.5px;top:658.69px;font-size:11px;line-height:13px;text-align:right">5,00</div>
<div class="t" style="right:45.5px;top:658.69px;font-size:11px;line-height:13px;text-align:right">0</div>
<div class="a" style="left:716px;top:659px;width:13px;height:13px;border:1px solid #333"></div>
<div class="a" style="left:16px;top:674px;width:783px;height:1px;background:#c8c8c8"></div>
<div class="t" style="left:16.5px;top:676.69px;font-size:11px;line-height:13px">10000018</div>
<div class="t" style="left:93px;top:676.69px;font-size:11px;line-height:13px">Laubegast, Amelie</div>
<div class="t" style="right:472px;top:676.69px;font-size:11px;line-height:13px;text-align:right">0,00</div>
<div class="t" style="right:441.5px;top:676.69px;font-size:11px;line-height:13px;text-align:right">0</div>
<div class="t" style="right:385.5px;top:676.69px;font-size:11px;line-height:13px;text-align:right">5,00</div>
<div class="t" style="right:314.5px;top:676.69px;font-size:11px;line-height:13px;text-align:right">0,00</div>
<div class="t" style="right:258.5px;top:676.69px;font-size:11px;line-height:13px;text-align:right">0,00</div>
<div class="t" style="right:202.5px;top:676.69px;font-size:11px;line-height:13px;text-align:right">0,00</div>
<div class="t" style="right:141.5px;top:676.69px;font-size:11px;line-height:13px;text-align:right">5,00</div>
<div class="t" style="right:45.5px;top:676.69px;font-size:11px;line-height:13px;text-align:right">0</div>
<div class="a" style="left:716px;top:677px;width:13px;height:13px;border:1px solid #333"></div>
<div class="a" style="left:16px;top:692px;width:783px;height:1px;background:#c8c8c8"></div>
</div></div>
<div class="a" style="left:800px;top:297px;width:16px;height:388px;background:#f0f0f0"></div>
<div class="a" style="left:800px;top:314px;width:16px;height:71px;background:#cdcdcd"></div>
<svg style="left:804px;top:303px" width="8" height="6"><path d="M0.6 5.2 L4 1.6 L7.4 5.2" fill="none" stroke="#555" stroke-width="1.8"/></svg>
<svg style="left:804px;top:674px" width="8" height="6"><path d="M0.8 1 L4 4.2 L7.2 1" fill="none" stroke="#555" stroke-width="1.6"/></svg>
<div class="a" style="left:284px;top:685px;width:83px;height:23px;border:1px solid #a4a4aa;background:#f0f0f0;box-shadow:inset 0 0 0 1px #b8d2f0"></div>
<div class="t" style="right:476px;top:689.69px;font-size:11px;line-height:13px;text-align:right">150,00</div>
<div class="a" style="left:366px;top:685px;width:32px;height:23px;border:1px solid #a4a4aa;background:#f0f0f0;box-shadow:inset 0 0 0 1px #b8d2f0"></div>
<div class="t" style="right:445px;top:689.69px;font-size:11px;line-height:13px;text-align:right">0</div>
<div class="a" style="left:397px;top:685px;width:57px;height:23px;border:1px solid #a4a4aa;background:#f0f0f0;box-shadow:inset 0 0 0 1px #b8d2f0"></div>
<div class="t" style="right:389px;top:689.69px;font-size:11px;line-height:13px;text-align:right">175,00</div>
<div class="a" style="left:453px;top:685px;width:72px;height:23px;border:1px solid #a4a4aa;background:#f0f0f0;box-shadow:inset 0 0 0 1px #b8d2f0"></div>
<div class="t" style="right:318px;top:689.69px;font-size:11px;line-height:13px;text-align:right">0,00</div>
<div class="a" style="left:524px;top:685px;width:57px;height:23px;border:1px solid #a4a4aa;background:#f0f0f0;box-shadow:inset 0 0 0 1px #b8d2f0"></div>
<div class="t" style="right:262px;top:689.69px;font-size:11px;line-height:13px;text-align:right">0,00</div>
<div class="a" style="left:580px;top:685px;width:57px;height:23px;border:1px solid #a4a4aa;background:#f0f0f0;box-shadow:inset 0 0 0 1px #b8d2f0"></div>
<div class="t" style="right:206px;top:689.69px;font-size:11px;line-height:13px;text-align:right">0,00</div>
<div class="a" style="left:636px;top:685px;width:62px;height:23px;border:1px solid #a4a4aa;background:#f0f0f0;box-shadow:inset 0 0 0 1px #b8d2f0"></div>
<div class="t" style="right:145px;top:689.69px;font-size:11px;line-height:13px;text-align:right">325,00</div>
<div class="a" style="left:95px;top:256px;width:604px;height:372px;background:#1a1a1a;border-radius:4px 4px 0 0"></div>
<div class="a" style="left:96px;top:257px;width:602px;height:370px;background:#33bbee;border-radius:3px 3px 0 0"></div>
<div class="a" style="left:96px;top:257px;width:601px;height:369px;background:#f4f8fc;border-radius:3px 3px 0 0"></div>
<div class="a" style="left:97px;top:282px;width:601px;height:343px;background:#c6daf0"></div>
<div class="a" style="left:97px;top:258px;width:600px;height:24px;background:linear-gradient(#8ea8c7,#b8d0ea);border-radius:2px 2px 0 0"></div>
<div class="a" style="left:98px;top:282px;width:598px;height:342px;background:#fff"></div>
<div class="t" style="top:264.04px;font-size:12px;line-height:14px;color:#1a1a30;letter-spacing:-0.2px;left:102.5px;">Drucken</div>
<div class="a" style="left:107px;top:291px;width:39px;height:35px;border:3px solid #f00;border-radius:1px"></div>
<div class="a" style="left:111px;top:295px;width:28px;height:28px;border:1px solid #b0b0b0;background:#dcdcdc"></div>
<svg style="left:111px;top:295px" width="30" height="30" viewBox="123 39 30 30">
<defs><linearGradient id="pp-12" x1="0" y1="0" x2="1" y2="1"><stop offset="0" stop-color="#ffffff"/><stop offset="0.6" stop-color="#9cc0f0"/><stop offset="1" stop-color="#5b8fe0"/></linearGradient></defs>
<path d="M128.3 41.2 L137.8 41.2 L141 50.2 L130.8 50.2 Z" fill="url(#pp-12)" stroke="#8a8ed0" stroke-width="0.8"/>
<path d="M128 41.3 H137.8 L141 50" fill="none" stroke="#6a6ab8" stroke-width="0.9"/>
<text x="132.4" y="49" font-size="8" font-weight="bold" fill="#26367a" font-family="Liberation Sans">1</text>
<path d="M126 53 L131 49.8 L143.5 50 L148 54.5 L148 60 L143 64.8 L134 64.8 L126 59 Z" fill="#e6e6e6" stroke="#a8a8a8" stroke-width="0.8"/>
<path d="M126.4 53 L131 50.2 L143.3 50.4 L147.6 54.5 L136 57.6 Z" fill="#f2f2f2"/>
<path d="M129.5 53.5 L133 51.6 L142 51.8 L144.5 54.2 L136 56.2 Z" fill="#e0e0e0"/>
<path d="M126.4 53.4 L136 57.8 L136 64.4 L126.4 58.8 Z" fill="#f7f7f7"/>
<path d="M126.4 53.4 L136 57.8 L147.6 54.6" fill="none" stroke="#b0b0b0" stroke-width="0.8"/>
<path d="M136 58 L147.6 55 V60 L143 64.4 H136 Z" fill="#d4d4d4"/>
<path d="M138 61 L145.5 59.2 L146.5 60.8 L139 62.8 Z" fill="#303030"/>
<rect x="138.5" y="62.6" width="6" height="1" fill="#5a5ab0"/>
<rect x="145" y="56.6" width="2.2" height="1.2" fill="#48c040"/>
</svg>
<svg style="left:158px;top:294px" width="30" height="30" viewBox="220 38 30 30">
<defs><linearGradient id="dg-62" x1="0" y1="0" x2="0.4" y2="1"><stop offset="0" stop-color="#a0a0fa"/><stop offset="1" stop-color="#6a6ad4"/></linearGradient></defs>
<rect x="233.5" y="43.5" width="9" height="18" fill="#c8c8f6" stroke="#6060b4" stroke-width="1"/>
<rect x="234" y="44" width="8" height="9.5" fill="#e4fcff"/>
<path d="M234 53.5 Q238 52.6 241.3 52.8 V59.8 H234Z" fill="#5cc83a"/>
<path d="M224.5 44.8 L233.5 41.8 V64.5 L224.5 62 Z" fill="url(#dg-62)" stroke="#5050b0" stroke-width="1"/>
<rect x="232.8" y="40.8" width="1.6" height="24.3" fill="#2e2e80"/>
<ellipse cx="230.3" cy="53" rx="0.9" ry="1.1" fill="#fff"/>
</svg>
<div class="a" style="left:98px;top:330px;width:597px;height:1px;background:#a0a0a0"></div>
<div class="a" style="left:131px;top:344px;width:13px;height:13px;border:1px solid #333;background:#fff"></div>
<div class="t" style="top:343.84px;font-size:12px;line-height:14px;color:#000;letter-spacing:0.1px;left:147px;">Monatsliste</div>
<div class="a" style="left:131px;top:368px;width:13px;height:13px;border:1px solid #333;background:#fff"></div>
<div class="t" style="top:367.84px;font-size:12px;line-height:14px;color:#000;letter-spacing:0.1px;left:147px;">Abrechnung</div>
<div class="a" style="left:98px;top:396px;width:597px;height:1px;background:#a0a0a0"></div>
<div class="t" style="left:108.5px;top:390.84px;font-size:12px;line-height:14px;font-weight:bold;background:#fff;padding:0 1.5px;letter-spacing:-0.15px">Bescheide</div>
<div class="a" style="left:117px;top:408px;width:111px;height:30px;border:3px solid #f00;border-radius:1px"></div>
<div class="a" style="left:131px;top:416px;width:13px;height:13px;border:1px solid #333;background:#fff"></div>
<svg style="left:133px;top:418px" width="9" height="9"><path d="M1 4.5 L3.5 7.5 L8.5 1.5" fill="none" stroke="#333" stroke-width="1.4"/></svg>
<div class="t" style="top:415.84px;font-size:12px;line-height:14px;color:#000;letter-spacing:0.45px;left:147px;">Essengeld</div>
<div class="a" style="left:131px;top:440px;width:13px;height:13px;border:1px solid #333;background:#fff"></div>
<div class="t" style="top:439.84px;font-size:12px;line-height:14px;color:#000;letter-spacing:0.2px;left:147px;">Mehrbedarf</div>
<div class="a" style="left:131px;top:464px;width:13px;height:13px;border:1px solid #333;background:#fff"></div>
<div class="t" style="top:463.84px;font-size:12px;line-height:14px;color:#000;letter-spacing:0.18px;left:147px;">Ferienbetreuung</div>
<div class="a" style="left:131px;top:488px;width:13px;height:13px;border:1px solid #333;background:#fff"></div>
<div class="t" style="top:487.84px;font-size:12px;line-height:14px;color:#000;letter-spacing:0.05px;left:147px;">Abrechnung BuT</div>
<div class="a" style="left:98px;top:518px;width:597px;height:1px;background:#a0a0a0"></div>
<div class="t" style="left:108.5px;top:510.84px;font-size:12px;line-height:14px;font-weight:bold;background:#fff;padding:0 1.5px;letter-spacing:-0.15px">Ausgabe</div>
<div class="a" style="left:130px;top:542px;width:13px;height:13px;border:1px solid #333;border-radius:50%;background:#fff"></div>
<div class="a" style="left:133px;top:545px;width:7px;height:7px;border-radius:50%;background:#333"></div>
<div class="t" style="top:541.84px;font-size:12px;line-height:14px;color:#000;letter-spacing:0.3px;left:146px;">Bildschirm</div>
<div class="a" style="left:130px;top:562px;width:13px;height:13px;border:1px solid #333;border-radius:50%;background:#fff"></div>
<div class="t" style="top:561.84px;font-size:12px;line-height:14px;color:#000;letter-spacing:0.1px;left:146px;">Drucker</div>
<div class="a" style="left:130px;top:586px;width:13px;height:13px;border:1px solid #333;border-radius:50%;background:#fff"></div>
<div class="t" style="top:585.84px;font-size:12px;line-height:14px;color:#000;letter-spacing:0.1px;left:146px;">eMail</div>
<div class="t" style="top:551.84px;font-size:12px;line-height:14px;color:#000;right:477.5px;text-align:right;">Drucker:</div>
<div class="a" style="left:365px;top:547px;width:228px;height:24px;border:1px solid #a8a8a8;background:#fff"></div>
<div class="t" style="top:551.84px;font-size:12px;line-height:14px;color:#000;letter-spacing:0.1px;left:370px;">Brother MFC-L5750DW series</div>
<div class="a" style="left:574px;top:549px;width:17px;height:20px;border:1px solid #a8a8a8;background:#e2e2e2"></div>
<svg style="left:578px;top:556px" width="9" height="6"><path d="M0.5 0.5 L4.5 4.5 L8.5 0.5" fill="none" stroke="#444" stroke-width="1"/></svg>
<div class="t" style="top:588.84px;font-size:12px;line-height:14px;color:#000;letter-spacing:0.15px;right:477.5px;text-align:right;">Exemplare:</div>
<div class="a" style="left:365px;top:584px;width:61px;height:24px;border:1px solid #a8a8ac;background:#fff"></div>
<div class="a" style="left:407px;top:587px;width:16px;height:18px;background:#e6e6e6;border:1px solid #a0a0a0"></div>
<div class="a" style="left:408px;top:595px;width:14px;height:1px;background:#b8b8b8"></div>
<svg style="left:411.5px;top:590px" width="7" height="4"><path d="M0 4 L3.5 0 L7 4Z" fill="#000"/></svg>
<svg style="left:411.5px;top:598px" width="7" height="4"><path d="M0 0 L3.5 4 L7 0Z" fill="#000"/></svg>
<div class="t" style="top:588.84px;font-size:12px;line-height:14px;color:#000;right:433.5px;text-align:right;">1</div>
</body></html>
